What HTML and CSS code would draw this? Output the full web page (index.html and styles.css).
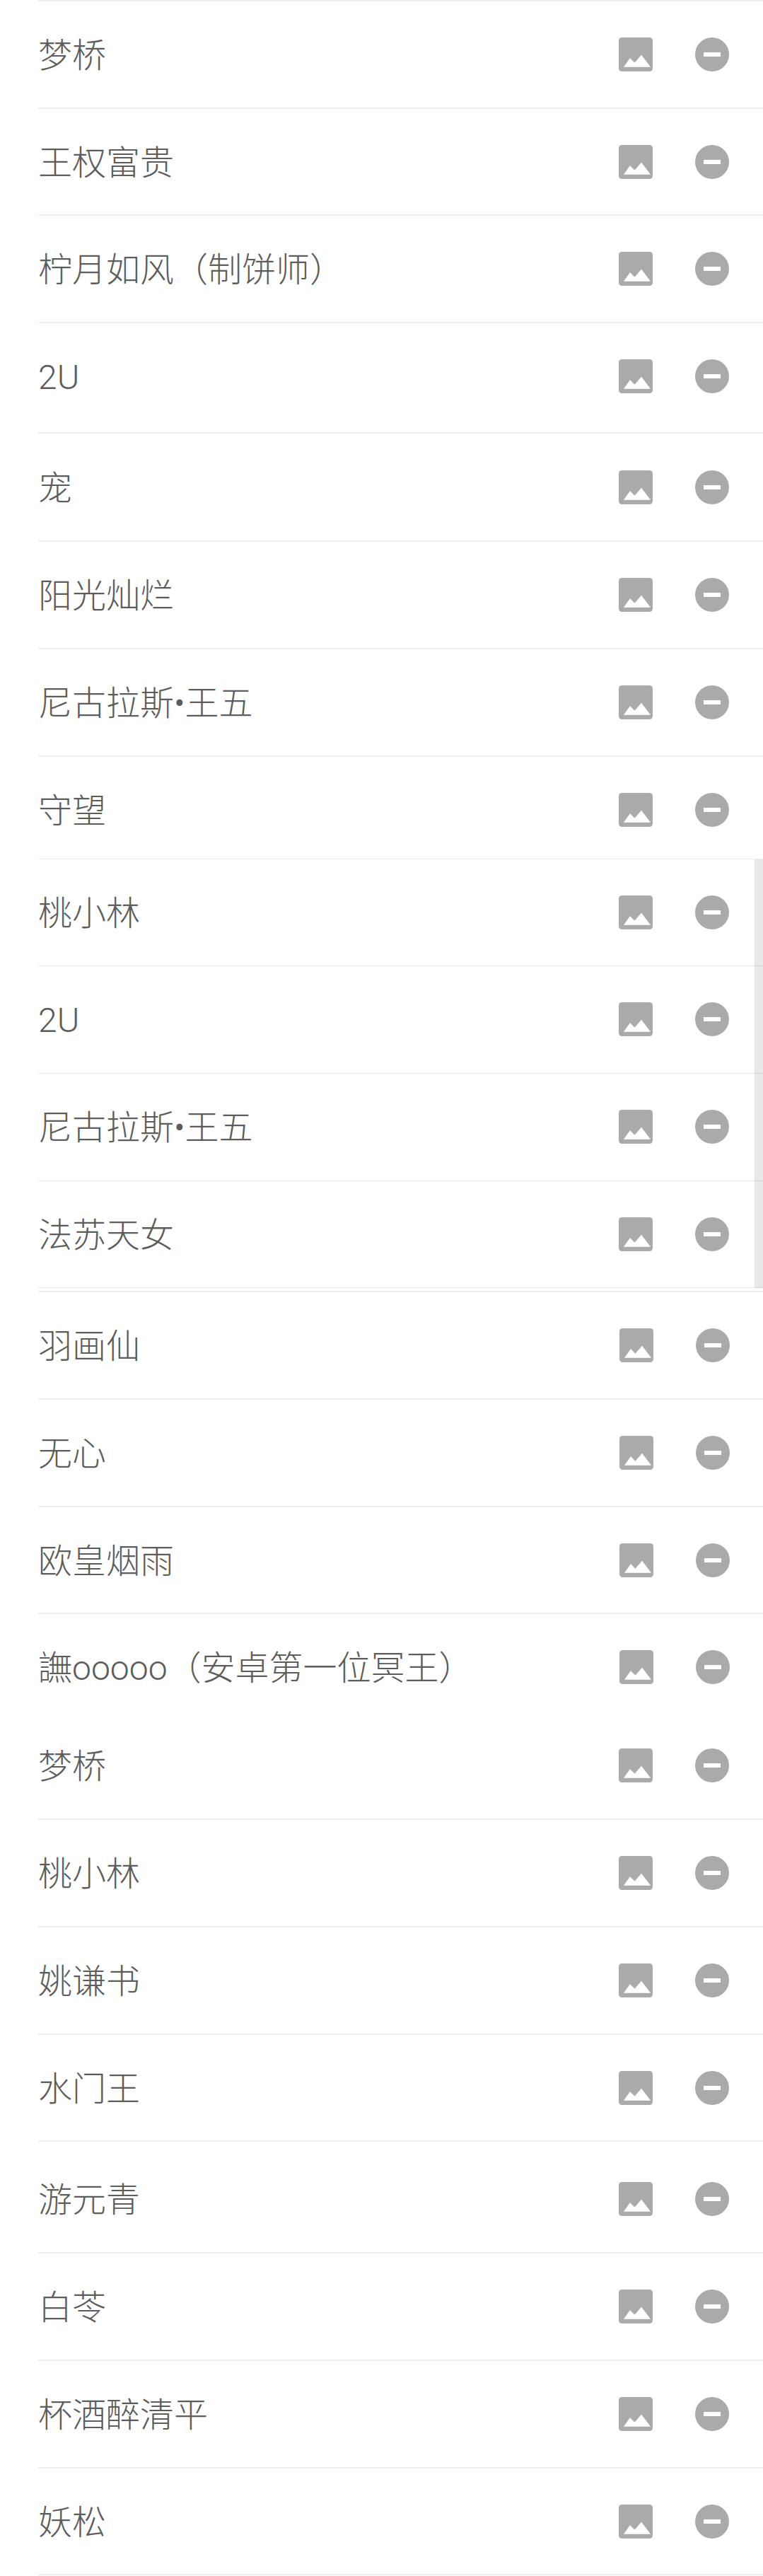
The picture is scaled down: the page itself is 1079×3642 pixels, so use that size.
FILE: index.html
```html
<!DOCTYPE html>
<html lang="zh-CN">
<head>
<meta charset="utf-8">
<title>名单</title>
<link rel="stylesheet" href="styles.css">
</head>
<body>
<svg class="defs" width="0" height="0" aria-hidden="true">
  <symbol id="i-img" viewBox="0 0 48 48">
    <rect width="48" height="48" rx="4.5" fill="#aaa"/>
    <path d="M7.5 41.5 16 29.5l6.5 6.5L32 25l12.5 16.5z" fill="#fff" stroke="#fff" stroke-width=".6" stroke-linejoin="round"/>
  </symbol>
  <symbol id="i-del" viewBox="0 0 48 48">
    <circle cx="24" cy="24" r="24" fill="#aaa"/>
    <rect x="12" y="21" width="24" height="6" fill="#fff"/>
  </symbol>
</svg>
<main class="list">
  <div class="row"><span class="name">梦桥</span><svg class="ico"><use href="#i-img"/></svg><svg class="ico"><use href="#i-del"/></svg></div>
  <div class="row"><span class="name">王权富贵</span><svg class="ico"><use href="#i-img"/></svg><svg class="ico"><use href="#i-del"/></svg></div>
  <div class="row"><span class="name">柠月如风（制饼师）</span><svg class="ico"><use href="#i-img"/></svg><svg class="ico"><use href="#i-del"/></svg></div>
  <div class="row row-h156"><span class="name">2U</span><svg class="ico"><use href="#i-img"/></svg><svg class="ico"><use href="#i-del"/></svg></div>
  <div class="row row-h153"><span class="name">宠</span><svg class="ico"><use href="#i-img"/></svg><svg class="ico"><use href="#i-del"/></svg></div>
  <div class="row"><span class="name">阳光灿烂</span><svg class="ico"><use href="#i-img"/></svg><svg class="ico"><use href="#i-del"/></svg></div>
  <div class="row"><span class="name">尼古拉斯•王五</span><svg class="ico"><use href="#i-img"/></svg><svg class="ico"><use href="#i-del"/></svg></div>
  <div class="row row-h145"><span class="name">守望</span><svg class="ico"><use href="#i-img"/></svg><svg class="ico"><use href="#i-del"/></svg></div>
  <section class="scrolled">
    <div class="row row-thin"><span class="name">桃小林</span><svg class="ico"><use href="#i-img"/></svg><svg class="ico"><use href="#i-del"/></svg></div>
    <div class="row row-thin"><span class="name">2U</span><svg class="ico"><use href="#i-img"/></svg><svg class="ico"><use href="#i-del"/></svg></div>
    <div class="row row-thin"><span class="name">尼古拉斯•王五</span><svg class="ico"><use href="#i-img"/></svg><svg class="ico"><use href="#i-del"/></svg></div>
    <div class="row row-thin"><span class="name">法苏天女</span><svg class="ico"><use href="#i-img"/></svg><svg class="ico"><use href="#i-del"/></svg></div>
  </section>
  <section class="shifted">
    <div class="row"><span class="name">羽画仙</span><svg class="ico"><use href="#i-img"/></svg><svg class="ico"><use href="#i-del"/></svg></div>
    <div class="row"><span class="name">无心</span><svg class="ico"><use href="#i-img"/></svg><svg class="ico"><use href="#i-del"/></svg></div>
    <div class="row"><span class="name">欧皇烟雨</span><svg class="ico"><use href="#i-img"/></svg><svg class="ico"><use href="#i-del"/></svg></div>
    <div class="row row-cut"><span class="name">譕ooooo（安卓第一位冥王）</span><svg class="ico"><use href="#i-img"/></svg><svg class="ico"><use href="#i-del"/></svg></div>
  </section>
  <div class="row"><span class="name">梦桥</span><svg class="ico"><use href="#i-img"/></svg><svg class="ico"><use href="#i-del"/></svg></div>
  <div class="row"><span class="name">桃小林</span><svg class="ico"><use href="#i-img"/></svg><svg class="ico"><use href="#i-del"/></svg></div>
  <div class="row"><span class="name">姚谦书</span><svg class="ico"><use href="#i-img"/></svg><svg class="ico"><use href="#i-del"/></svg></div>
  <div class="row"><span class="name">水门王</span><svg class="ico"><use href="#i-img"/></svg><svg class="ico"><use href="#i-del"/></svg></div>
  <div class="row row-h158"><span class="name">游元青</span><svg class="ico"><use href="#i-img"/></svg><svg class="ico"><use href="#i-del"/></svg></div>
  <div class="row"><span class="name">白苓</span><svg class="ico"><use href="#i-img"/></svg><svg class="ico"><use href="#i-del"/></svg></div>
  <div class="row"><span class="name">杯酒醉清平</span><svg class="ico"><use href="#i-img"/></svg><svg class="ico"><use href="#i-del"/></svg></div>
  <div class="row"><span class="name">妖松</span><svg class="ico"><use href="#i-img"/></svg><svg class="ico"><use href="#i-del"/></svg></div>
</main>
</body>
</html>
```
FILE: styles.css
```css
* { box-sizing: border-box; }

html, body {
  margin: 0;
  padding: 0;
  background: #fff;
}

.defs {
  display: block;
  height: 0;
}

.list {
  margin-left: 54px;
  border-top: 2px solid #eee;
  color: #5c5c5c;
  font-family: Roboto, "Noto Sans CJK SC", sans-serif;
  font-weight: 300;
  font-size: 48px;
}

.row {
  display: flex;
  align-items: flex-start;
  gap: 60px;
  height: 151.7px;
  padding: 51px 47.7px 0 0;
  border-bottom: 2px solid #eee;
}

.name {
  flex: 1;
  min-width: 0;
  height: 48px;
  line-height: 52px;
  white-space: nowrap;
}

.ico {
  flex: none;
  width: 48px;
  height: 48px;
}

.row-h156 { height: 156.2px; }
.row-h153 { height: 153px; padding-top: 52px; }
.row-h158 { height: 158px; padding-top: 57px; }

.row-h145 {
  height: 145px;
  border-bottom-width: 1px;
}

.row-thin { border-bottom: 1px solid #e9e9e9; }

.row-cut {
  height: 139px;
  border-bottom: 0;
}

.scrolled {
  position: relative;
}

.scrolled::after {
  content: "";
  position: absolute;
  top: 0;
  right: 0;
  bottom: 0;
  width: 12px;
  background: rgba(0, 0, 0, .09);
}

.shifted {
  margin-top: 4px;
  border-top: 2px solid #eee;
}

.shifted .row { padding-right: 47px; }
```
